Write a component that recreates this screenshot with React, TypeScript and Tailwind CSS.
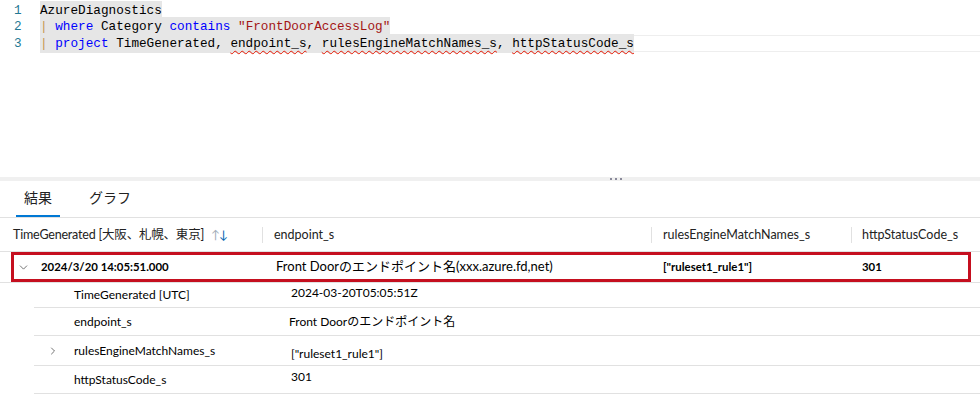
import { ChevronDown, ChevronRight } from "lucide-react";

const mono = { fontFamily: '"Liberation Mono", "DejaVu Sans Mono", monospace' };

const Squiggle = ({ children }: { children: React.ReactNode }) => (
  <span className="underline decoration-wavy decoration-[#e51400] decoration-1 underline-offset-[3px]">
    {children}
  </span>
);

const Editor = () => (
  <div className="h-[177px] pt-[2px] text-[12.7px] text-black" style={mono}>
    <div className="flex h-[16.5px] items-center">
      <div className="w-[40px] pl-[14px] text-[#237893]">1</div>
      <span className="bg-[#e6e6e6]">AzureDiagnostics</span>
    </div>
    <div className="flex h-[16.5px] items-center">
      <div className="w-[40px] pl-[14px] text-[#237893]">2</div>
      <span className="bg-[#e6e6e6] whitespace-pre">
        <span className="text-[#c49550]">|</span> <span className="text-[#0000ff]">where</span> Category{" "}
        <span className="text-[#0000ff]">contains</span> <span className="text-[#a31515]">"FrontDoorAccessLog"</span>
      </span>
    </div>
    <div className="flex h-[16.5px] items-center">
      <div className="w-[40px] pl-[14px] text-[#237893]">3</div>
      <div className="flex h-full flex-1 items-center border-y border-[#eeeeee]">
        <span className="bg-[#e6e6e6] whitespace-pre">
          <span className="text-[#c49550]">|</span> <span className="text-[#0000ff]">project</span> TimeGenerated,{" "}
          <Squiggle>endpoint_s</Squiggle>, <Squiggle>rulesEngineMatchNames_s</Squiggle>,{" "}
          <Squiggle>httpStatusCode_s</Squiggle>
        </span>
      </div>
    </div>
  </div>
);

const Splitter = () => (
  <div className="flex h-[4px] items-center justify-center bg-[#f0f0f0] pl-[252px]">
    <span className="flex gap-[3px]">
      <span className="h-[2px] w-[2px] bg-[#8a8a9a]" />
      <span className="h-[2px] w-[2px] bg-[#8a8a9a]" />
      <span className="h-[2px] w-[2px] bg-[#8a8a9a]" />
    </span>
  </div>
);

const Tabs = () => (
  <div className="flex h-[37px] items-end gap-[21px] border-b border-[#e1e1e1] pl-[16px] text-[14px] text-[#222]">
    <div className="flex h-full flex-col justify-end">
      <div className="px-[8px] pb-[7px]">結果</div>
      <div className="h-[2px] bg-[#0078d4]" />
    </div>
    <div className="flex h-full flex-col justify-end">
      <div className="px-[8px] pb-[9px]">グラフ</div>
    </div>
  </div>
);

const Header = () => (
  <div className="flex h-[33px] items-center pt-[1px] text-[12.5px] text-[#222]">
    <div className="flex w-[262px] items-center pl-[13px]">
      <span className="tracking-[-0.2px]">TimeGenerated [大阪、札幌、東京]</span>
      <span className="ml-[7px] flex items-end text-[12px] leading-none">
        <span className="text-[#a0acb8]">↑</span>
        <span className="-ml-[1px] text-[#0063b1]">↓</span>
      </span>
    </div>
    <div className="h-[16px] w-px bg-[#e1e1e1]" />
    <div className="w-[388px] pl-[11px]">endpoint_s</div>
    <div className="h-[16px] w-px bg-[#e1e1e1]" />
    <div className="w-[199px] pl-[11px]">rulesEngineMatchNames_s</div>
    <div className="h-[16px] w-px bg-[#e1e1e1]" />
    <div className="pl-[10px]">httpStatusCode_s</div>
  </div>
);

const MainRow = () => (
  <div className="border-t border-[#e1e1e1]">
    <div className="border-b border-[#e1e1e1] pr-[9px] pl-[11px]">
      <div className="flex h-[30px] items-center border-[3px] border-[#c50f1f] text-black">
        <ChevronDown className="ml-[3px] h-[13px] w-[13px] text-[#555]" strokeWidth={1.5} />
        <span className="ml-[11px] w-[235px] text-[11.4px] font-bold">2024/3/20 14:05:51.000</span>
        <span className="w-[387px] text-[13px]">Front Doorのエンドポイント名(xxx.azure.fd,net)</span>
        <span className="w-[199px] text-[11.4px] font-bold">["ruleset1_rule1"]</span>
        <span className="text-[11.4px] font-bold">301</span>
      </div>
    </div>
  </div>
);

const details = [
  { k: "TimeGenerated [UTC]", v: "2024-03-20T05:05:51Z", h: "h-[25px]", vy: "-translate-y-[2px]", vx: "pl-[217px]" },
  { k: "endpoint_s", v: "Front Doorのエンドポイント名", h: "h-[28px]", vy: "", vx: "pl-[215px]" },
  { k: "rulesEngineMatchNames_s", v: '["ruleset1_rule1"]', h: "h-[30px]", vy: "translate-y-[3px]", vx: "pl-[217px]", chev: true },
  { k: "httpStatusCode_s", v: "301", h: "h-[28px]", vy: "-translate-y-[3px]", vx: "pl-[217px]" },
];

const Details = () => (
  <div className="ml-[34px] text-[12px] text-black">
    {details.map((d) => (
      <div key={d.k} className={`flex items-center border-b border-[#e1e1e1] ${d.h}`}>
        <div className="flex w-[40px] items-center justify-end pr-[15px]">
          {d.chev && <ChevronRight className="h-[12px] w-[12px] text-[#444]" strokeWidth={1.5} />}
        </div>
        <span className="w-[0px] whitespace-nowrap">{d.k}</span>
        <span className={`${d.vx} ${d.vy} whitespace-nowrap`}>{d.v}</span>
      </div>
    ))}
  </div>
);

export default function App() {
  return (
    <div
      className="relative h-[396px] w-[980px] overflow-hidden bg-white"
      style={{ fontFamily: '"Segoe UI", Lato, "Noto Sans CJK JP", sans-serif' }}
    >
      <Editor />
      <Splitter />
      <Tabs />
      <Header />
      <MainRow />
      <Details />
    </div>
  );
}
